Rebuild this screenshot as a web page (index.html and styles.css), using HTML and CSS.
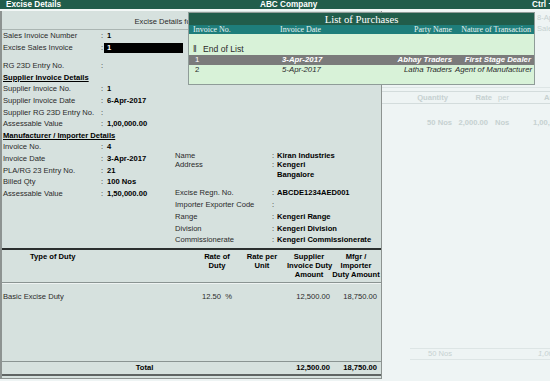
FILE: index.html
```html
<!DOCTYPE html>
<html lang="en">
  <head>
    <meta charset="UTF-8" />
    <title>Excise Details</title>
    <link rel="stylesheet" href="styles.css">
  </head>
  <body>
    <div class="topbar">
      <span class="tb-title">Excise Details</span>
      <span class="tb-company">ABC Company</span>
      <span class="tb-key">Ctrl +</span>
    </div>

    <div class="screen">
      <div class="panel">
        <div class="panel-head">Excise Details for Sales Invoice</div>

        <div class="form">
          <div class="row">
            <span class="lbl">Sales Invoice Number</span><span class="colon">:</span>
            <span class="val">1</span><span class="aside">Sales Invoice Date</span>
          </div>
          <div class="row">
            <span class="lbl">Excise Sales Invoice</span><span class="colon">:</span>
            <span class="val input">1</span>
          </div>
          <div class="row gap">
            <span class="lbl">RG 23D Entry No.</span><span class="colon">:</span>
          </div>
          <div class="row"><span class="heading">Supplier Invoice Details</span></div>
          <div class="row">
            <span class="lbl">Supplier Invoice No.</span><span class="colon">:</span><span class="val">1</span>
          </div>
          <div class="row">
            <span class="lbl">Supplier Invoice Date</span><span class="colon">:</span><span class="val">6-Apr-2017</span>
          </div>
          <div class="row">
            <span class="lbl">Supplier RG 23D Entry No.</span><span class="colon">:</span>
          </div>
          <div class="row">
            <span class="lbl">Assessable Value</span><span class="colon">:</span><span class="val">1,00,000.00</span>
          </div>
          <div class="row"><span class="heading">Manufacturer / Importer Details</span></div>

          <div class="mfg">
            <div class="mfg-left">
              <div class="row">
                <span class="lbl">Invoice No.</span><span class="colon">:</span><span class="val">4</span>
              </div>
              <div class="row">
                <span class="lbl">Invoice Date</span><span class="colon">:</span><span class="val">3-Apr-2017</span>
              </div>
              <div class="row">
                <span class="lbl">PLA/RG 23 Entry No.</span><span class="colon">:</span><span class="val">21</span>
              </div>
              <div class="row">
                <span class="lbl">Billed Qty</span><span class="colon">:</span><span class="val">100 Nos</span>
              </div>
              <div class="row">
                <span class="lbl">Assessable Value</span><span class="colon">:</span><span class="val">1,50,000.00</span>
              </div>
            </div>

            <div class="mfg-right">
              <div class="prow tight">
                <span class="lbl">Name</span><span class="colon">:</span><span class="val">Kiran Industries</span>
              </div>
              <div class="prow tight">
                <span class="lbl">Address</span><span class="colon">:</span>
                <span class="val">Kengeri<br>Bangalore</span>
              </div>
              <div class="prow gap">
                <span class="lbl">Excise Regn. No.</span><span class="colon">:</span><span class="val">ABCDE1234AED001</span>
              </div>
              <div class="prow">
                <span class="lbl">Importer Exporter Code</span><span class="colon">:</span>
              </div>
              <div class="prow">
                <span class="lbl">Range</span><span class="colon">:</span><span class="val">Kengeri Range</span>
              </div>
              <div class="prow">
                <span class="lbl">Division</span><span class="colon">:</span><span class="val">Kengeri Division</span>
              </div>
              <div class="prow">
                <span class="lbl">Commissionerate</span><span class="colon">:</span><span class="val">Kengeri Commissionerate</span>
              </div>
            </div>
          </div>
        </div>

        <div class="duty-head">
          <span class="dh-type">Type of Duty</span>
          <span>Rate of<br>Duty</span>
          <span>Rate per<br>Unit</span>
          <span>Supplier<br>Invoice Duty<br>Amount</span>
          <span>Mfgr /<br>Importer<br>Duty Amount</span>
        </div>

        <div class="duty-body">
          <div class="duty-row">
            <span>Basic Excise Duty</span>
            <span class="num c2">12.50&nbsp;&nbsp;%</span>
            <span></span>
            <span class="num c4">12,500.00</span>
            <span class="num c5">18,750.00</span>
          </div>
        </div>

        <div class="duty-total">
          <span class="total-lbl">Total</span>
          <span class="num c4">12,500.00</span>
          <span class="num c5">18,750.00</span>
        </div>
      </div>

      <!-- faded voucher screen behind the excise details -->
      <div class="ghost">
        <div class="ghost-top">8-Apr-2017<br>Sales</div>
        <div class="ghost-head">
          <span class="ga">Quantity</span>
          <span class="gb">Rate</span>
          <span class="gc">per</span>
          <span class="gd">Amount</span>
        </div>
        <div class="ghost-row">
          <span class="ga">50 Nos</span>
          <span class="gb">2,000.00</span>
          <span class="gc">Nos</span>
          <span class="gd">1,00,000.00</span>
        </div>
        <div class="ghost-foot">
          <span class="gf-qty">50 Nos</span>
          <span class="gf-amt">1,00,000.00</span>
        </div>
      </div>

      <div class="popup">
        <div class="pop-title">List of Purchases</div>
        <div class="pop-cols">
          <span>Invoice No.</span>
          <span>Invoice Date</span>
          <span class="r">Party Name</span>
          <span class="r">Nature of Transaction</span>
        </div>
        <div class="pop-body">
          <div class="pop-end"><span class="bar">&#8214;</span>End of List</div>
          <div class="pop-row selected">
            <span class="no">1</span>
            <span>3-Apr-2017</span>
            <span class="r">Abhay Traders</span>
            <span class="r">First Stage Dealer</span>
          </div>
          <div class="pop-row">
            <span class="no">2</span>
            <span>5-Apr-2017</span>
            <span class="r">Latha Traders</span>
            <span class="r">Agent of Manufacturer</span>
          </div>
        </div>
      </div>
    </div>
  </body>
</html>
```

FILE: styles.css
```css
* {
  box-sizing: border-box;
}

body {
  margin: 0;
  width: 550px;
  height: 381px;
  overflow: hidden;
  font-family: "Liberation Sans", Arial, sans-serif;
  font-size: 7.6px;
  color: #2a2a2a;
  background: #eef4f4;
}

.topbar {
  height: 11px;
  display: grid;
  grid-template-columns: 260px 272px 1fr;
  background: #215d4b;
  border-bottom: 2px solid #f2f7f6;
  color: #fff;
  font-weight: bold;
  font-size: 8.2px;
  line-height: 9px;
  white-space: nowrap;
  overflow: hidden;
}

.tb-title {
  padding-left: 6px;
}

.screen {
  position: relative;
  display: flex;
  height: 368px;
}

/* left panel */
.panel {
  width: 382px;
  flex-shrink: 0;
  display: flex;
  flex-direction: column;
  background: #d6e1de;
  border-left: 2px solid #8d9391;
  border-right: 1px solid #8d9391;
  border-bottom: 1px solid #8d9391;
}

.panel-head {
  height: 19px;
  padding-top: 2px;
  line-height: 17px;
  text-align: center;
  border-bottom: 1px solid #aab5b2;
  padding-right: 8px;
}

.form {
  padding-left: 1px;
}

.row {
  display: grid;
  grid-template-columns: 98px 6px 80px 1fr;
  line-height: 11.6px;
  white-space: nowrap;
}

.row.gap {
  margin-top: 7px;
}

.val {
  font-weight: bold;
  color: #000;
}

.input {
  background: #000;
  color: #fff;
  margin-left: -3px;
  padding-left: 3px;
  height: 10px;
  line-height: 10px;
  margin-top: 1px;
  width: 79px;
}

.aside {
  padding-left: 3px;
}

.heading {
  grid-column: 1 / 4;
  font-weight: bold;
  color: #000;
  text-decoration: underline;
}

.mfg {
  display: grid;
  grid-template-columns: 172px 1fr;
  margin-bottom: 1.6px;
}

.mfg-left .row {
  grid-template-columns: 98px 6px 1fr;
}

.mfg-right {
  padding-top: 9.6px;
}

.prow {
  display: grid;
  grid-template-columns: 97px 5px 1fr;
  line-height: 11.9px;
  white-space: nowrap;
}

.prow.tight {
  line-height: 9.3px;
}

.prow.gap {
  margin-top: 8px;
}

/* duty table */
.duty-head,
.duty-row,
.duty-total {
  display: grid;
  grid-template-columns: 195px 40px 50px 44px 50px;
  white-space: nowrap;
}

.duty-head {
  border-top: 2px solid #2b2f2e;
  border-bottom: 1px solid #8a9492;
  box-shadow: 0 1px 0 #eef3f2;
  padding: 2.5px 0;
  line-height: 9px;
  font-weight: bold;
  color: #000;
  text-align: center;
}

.duty-head .dh-type {
  text-align: left;
  padding-left: 28px;
}

.duty-body {
  flex: 1;
  padding-top: 8.2px;
}

.duty-row {
  line-height: 11.6px;
}

.duty-row span:first-child {
  padding-left: 1px;
}

.num {
  text-align: right;
}

.c2 {
  padding-right: 5px;
}

.c4 {
  padding-right: 1px;
}

.c5 {
  padding-right: 4px;
}

.duty-total {
  height: 15px;
  line-height: 12px;
  border-top: 1px solid #8a9492;
  border-bottom: 2px solid #5f6463;
  margin-bottom: 2px;
  font-weight: bold;
  color: #000;
}

.total-lbl {
  grid-column: 1 / 4;
  text-align: center;
}

/* faded screen on the right */
.ghost {
  flex: 1;
  display: flex;
  flex-direction: column;
  overflow: hidden;
  color: #c6d1d1;
  font-weight: bold;
  white-space: nowrap;
}

.ghost-top {
  height: 77px;
  padding: 1px 0 0 155px;
  line-height: 11px;
  font-weight: normal;
  border-bottom: 1px solid #dde5e5;
}

.ghost-head,
.ghost-row {
  display: grid;
  grid-template-columns: 70px 40px 28px 1fr;
  line-height: 11px;
}

.ghost-head {
  margin-top: 3px;
  border-top: 1px solid #d3dcdc;
  border-bottom: 1px solid #d3dcdc;
}

.ghost-head .ga {
  text-align: right;
  padding-right: 4px;
}

.ghost-head .gb {
  text-align: right;
}

.ghost-head .gc {
  padding-left: 6px;
  font-weight: normal;
}

.ghost-head .gd {
  padding-left: 24px;
}

.ghost-row {
  margin-top: 13.2px;
  line-height: 11.6px;
}

.ghost-row .ga {
  text-align: right;
}

.ghost-row .gb {
  text-align: right;
  padding-right: 4px;
}

.ghost-row .gc {
  padding-left: 3px;
}

.ghost-row .gd {
  padding-left: 13px;
}

.ghost-foot {
  margin: auto 0 19px 28px;
  display: grid;
  grid-template-columns: 42px 1fr;
  line-height: 10px;
  border-top: 1px solid #dde5e5;
  border-bottom: 1px solid #dde5e5;
  font-weight: normal;
}

.gf-qty {
  text-align: right;
}

.gf-amt {
  padding-left: 86px;
  font-style: italic;
}

/* popup list */
.popup {
  position: absolute;
  top: 1px;
  left: 188px;
  width: 347px;
  height: 73px;
  background: #d8f2d8;
  border: 1px solid #8f9c98;
}

.pop-title {
  height: 12px;
  line-height: 12px;
  background: #215d4b;
  color: #fff;
  text-align: center;
  font-family: "Liberation Serif", "Times New Roman", serif;
  font-size: 10.7px;
}

.pop-cols,
.pop-row {
  display: grid;
  grid-template-columns: 91px 100px 75px 79px;
  white-space: nowrap;
}

.pop-cols {
  height: 9px;
  line-height: 9px;
  background: #1e7e7b;
  color: #e8f4f2;
  font-family: "Liberation Serif", "Times New Roman", serif;
  font-size: 8px;
}

.pop-cols span:first-child {
  padding-left: 4px;
}

.r {
  text-align: right;
  padding-right: 3px;
}

.pop-body {
  padding-top: 10px;
}

.pop-end {
  line-height: 11px;
  font-size: 8.6px;
  padding-left: 4px;
}

.bar {
  display: inline-block;
  width: 10px;
  font-size: 9px;
}

.pop-row {
  height: 10px;
  line-height: 10px;
  font-size: 7.8px;
  font-style: italic;
}

.pop-row .no {
  font-style: normal;
  padding-left: 6px;
}

.pop-row span:nth-child(2) {
  padding-left: 2px;
}

.pop-row.selected {
  background: #7b7b7b;
  color: #fff;
  font-weight: bold;
}

.pop-row.selected .no {
  font-weight: normal;
}
```
